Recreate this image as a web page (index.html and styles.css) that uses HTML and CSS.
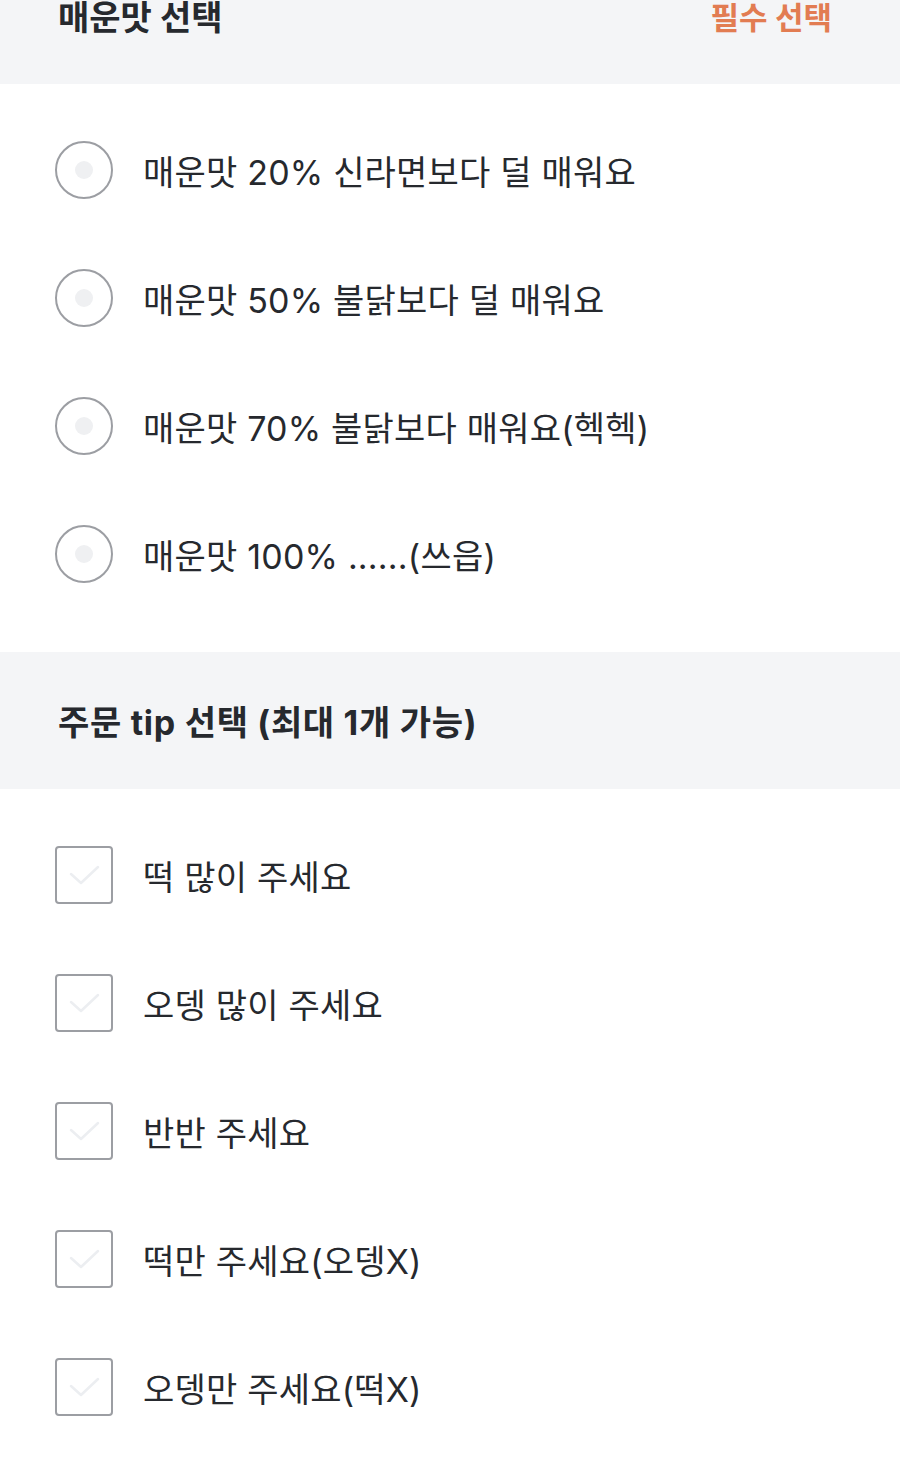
FILE: index.html
```html
<!DOCTYPE html>
<html lang="ko">
<head>
<meta charset="utf-8">
<link rel="stylesheet" href="styles.css">
</head>
<body>
<div class="page">
  <div class="section-head first">
    <span class="title">매운맛 선택</span>
    <span class="req">필수 선택</span>
  </div>
  <ul class="options radios">
    <li class="row"><span class="radio"><span class="dot"></span></span><span class="label">매운맛 20% 신라면보다 덜 매워요</span></li>
    <li class="row"><span class="radio"><span class="dot"></span></span><span class="label">매운맛 50% 불닭보다 덜 매워요</span></li>
    <li class="row"><span class="radio"><span class="dot"></span></span><span class="label">매운맛 70% 불닭보다 매워요(헥헥)</span></li>
    <li class="row"><span class="radio"><span class="dot"></span></span><span class="label">매운맛 100% ......(쓰읍)</span></li>
  </ul>
  <div class="section-head">
    <span class="title wide">주문 tip 선택 (최대 1개 가능)</span>
  </div>
  <ul class="options checks">
    <li class="row"><span class="check"><svg viewBox="0 0 58 58" width="58" height="58"><path d="M16 28 L26 37 L43 21" fill="none" stroke="#eceef1" stroke-width="2.5" stroke-linecap="round" stroke-linejoin="round"/></svg></span><span class="label">떡 많이 주세요</span></li>
    <li class="row"><span class="check"><svg viewBox="0 0 58 58" width="58" height="58"><path d="M16 28 L26 37 L43 21" fill="none" stroke="#eceef1" stroke-width="2.5" stroke-linecap="round" stroke-linejoin="round"/></svg></span><span class="label">오뎅 많이 주세요</span></li>
    <li class="row"><span class="check"><svg viewBox="0 0 58 58" width="58" height="58"><path d="M16 28 L26 37 L43 21" fill="none" stroke="#eceef1" stroke-width="2.5" stroke-linecap="round" stroke-linejoin="round"/></svg></span><span class="label">반반 주세요</span></li>
    <li class="row"><span class="check"><svg viewBox="0 0 58 58" width="58" height="58"><path d="M16 28 L26 37 L43 21" fill="none" stroke="#eceef1" stroke-width="2.5" stroke-linecap="round" stroke-linejoin="round"/></svg></span><span class="label">떡만 주세요(오뎅X)</span></li>
    <li class="row"><span class="check"><svg viewBox="0 0 58 58" width="58" height="58"><path d="M16 28 L26 37 L43 21" fill="none" stroke="#eceef1" stroke-width="2.5" stroke-linecap="round" stroke-linejoin="round"/></svg></span><span class="label">오뎅만 주세요(떡X)</span></li>
  </ul>
</div>
</body>
</html>
```
FILE: styles.css
```css
html, body {
  margin: 0;
  padding: 0;
  background: #ffffff;
}
body {
  font-family: "Inter", "Noto Sans CJK KR", "Noto Sans", sans-serif;
  color: #26292e;
  overflow: hidden;
}
.page {
  margin-top: -53px;
}
.section-head {
  height: 137px;
  background: #f4f5f7;
  display: flex;
  align-items: center;
  justify-content: space-between;
  padding: 0 68px 0 58px;
  box-sizing: border-box;
}
.section-head .title {
  font-size: 34px;
  font-weight: 700;
}
.section-head .title.wide {
  letter-spacing: 0.7px;
}
.section-head .req {
  font-size: 31px;
  font-weight: 700;
  color: #e27c52;
}
.options {
  list-style: none;
  margin: 0;
  padding: 22px 0 34px 55px;
}
.checks {
  padding-bottom: 30px;
}
.row {
  height: 128px;
  display: flex;
  align-items: center;
}
.radio {
  width: 58px;
  height: 58px;
  box-sizing: border-box;
  border: 2px solid #9c9ea3;
  border-radius: 50%;
  display: flex;
  align-items: center;
  justify-content: center;
  flex: none;
}
.dot {
  width: 18px;
  height: 18px;
  border-radius: 50%;
  background: #eff0f2;
}
.check {
  width: 58px;
  height: 58px;
  box-sizing: border-box;
  border: 2px solid #9c9ea3;
  border-radius: 4px;
  flex: none;
  position: relative;
}
.check svg {
  position: absolute;
  left: -2px;
  top: -2px;
}
.label {
  margin-left: 30px;
  font-size: 34px;
  font-weight: 400;
  letter-spacing: 0.2px;
}
```
